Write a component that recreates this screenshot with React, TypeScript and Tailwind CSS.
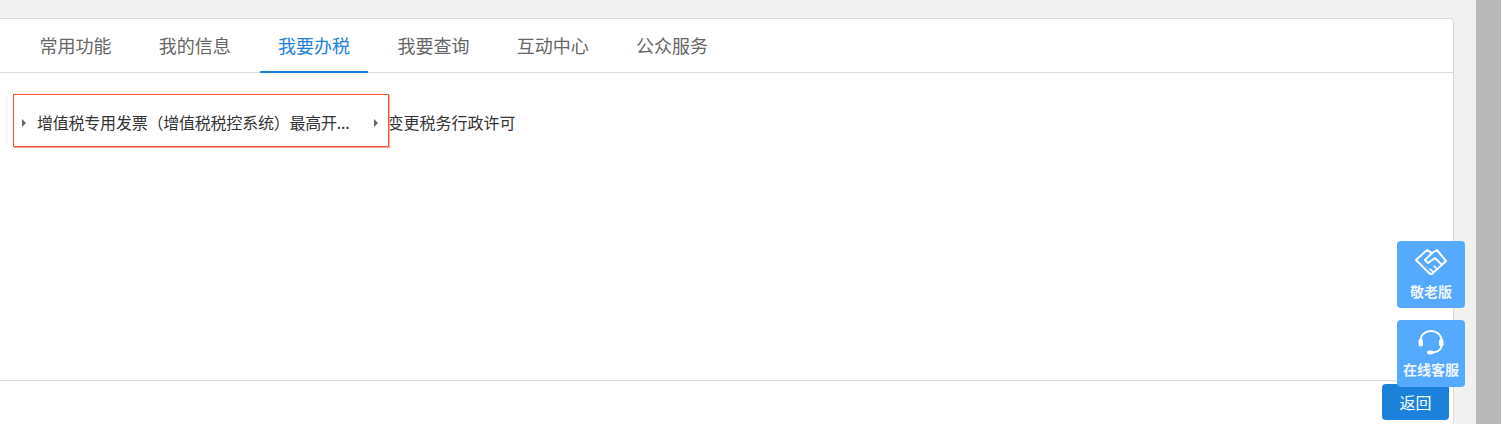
const tabs = ["常用功能", "我的信息", "我要办税", "我要查询", "互动中心", "公众服务"];

function Arrow() {
  return <span className="h-0 w-0 shrink-0 border-y-[4.5px] border-l-[4.5px] border-y-transparent border-l-[#666]" />;
}

function HandshakeIcon() {
  return (
    <svg width="34" height="28" viewBox="0 0 34 28" fill="none" stroke="#fff" strokeWidth="2" strokeLinejoin="round" strokeLinecap="round">
      <path d="M13 2 L2 12 L15 25 Q17 27 19 25 L32 13 L23 2 L18 5 Z" />
      <path d="M18 5 L11 12 L14 15 L21 10 L28 17" />
      <path d="M23 21 L20 18 M19 24 L16 21" strokeWidth="1.5" />
    </svg>
  );
}

function HeadsetIcon() {
  return (
    <svg className="mt-[4px]" width="28" height="28" viewBox="0 0 28 28" fill="none" stroke="#fff" strokeWidth="2" strokeLinecap="round">
      <path d="M3.5 12 C3.5 -1.5 24.5 -1.5 24.5 12" />
      <path d="M24.5 17 C24 21 21 23 16 23.5" />
      <rect x="1.5" y="10" width="4.5" height="7.5" rx="2" fill="#fff" stroke="none" />
      <rect x="22" y="10" width="4.5" height="7.5" rx="2" fill="#fff" stroke="none" />
      <rect x="10" y="21.5" width="6.5" height="4" rx="2" fill="#fff" stroke="none" />
    </svg>
  );
}

function FloatButton({ icon, label, labelClass }: { icon: React.ReactNode; label: string; labelClass: string }) {
  return (
    <div className="flex h-[67px] w-[68px] flex-col items-center rounded bg-[#55aaff] pt-[5px] text-white">
      <div className="flex h-[32px] items-center justify-center">{icon}</div>
      <span className={`${labelClass} text-[14px] font-bold leading-[18px] whitespace-nowrap opacity-90`}>{label}</span>
    </div>
  );
}

export default function App() {
  return (
    <div
      className="relative h-[424px] w-[1502px] overflow-hidden bg-[#f1f1f1] pt-[18px]"
      style={{ fontFamily: '"Microsoft YaHei", "Noto Sans CJK SC", "Liberation Sans", sans-serif' }}
    >
      {/* scrollbar */}
      <div className="absolute top-0 right-px bottom-0 w-[25px] bg-[#b9b9b9]" />

      <div className="ml-[-10px] flex h-[420px] w-[1464px] flex-col rounded-t border border-[#d9d9d9] bg-white">
        {/* Tabs */}
        <div className="flex h-[54px] shrink-0 border-b border-[#d9d9d9] pl-[30px]">
          {tabs.map((t) =>
            t === "我要办税" ? (
              <div key={t} className="mr-[11.3px] h-[54px] w-[108px] border-b-2 border-[#1b81db] pt-[13px] pl-px text-center text-[18px] leading-[27px] text-[#1b81db]">
                {t}
              </div>
            ) : (
              <div key={t} className="mr-[11.3px] w-[108px] pt-[13px] pl-px text-center text-[18px] leading-[27px] text-[#666]">
                {t}
              </div>
            )
          )}
        </div>

        {/* Content */}
        <div className="relative h-[308px] shrink-0 border-b border-[#d9d9d9]">
          <div className="flex items-center pt-[39px] pl-[31px] text-[16px] leading-[20px] text-[#333]">
            <Arrow />
            <span className="mb-[2px] ml-[11px] w-[336.5px] tracking-[-0.22px] whitespace-nowrap">增值税专用发票（增值税税控系统）最高开...</span>
            <Arrow />
            <span className="mb-[2px] ml-[10px] whitespace-nowrap">变更税务行政许可</span>
          </div>
          <div className="absolute top-[21px] left-[22px] h-[53px] w-[376px] border border-[#ff5233] shadow-[1px_1px_0_#ffa99a]" />
        </div>

        {/* Footer */}
        <div className="flex justify-end pt-[3px] pr-[4px]">
          <button className="h-[36px] w-[67px] rounded-sm bg-[#1b81db] text-[16px] text-white">返回</button>
        </div>
      </div>

      {/* floating buttons */}
      <div className="absolute top-[241px] left-[1397px] flex flex-col gap-[12px]">
        <FloatButton icon={<HandshakeIcon />} label="敬老版" labelClass="mt-[4px]" />
        <FloatButton icon={<HeadsetIcon />} label="在线客服" labelClass="mt-[3px]" />
      </div>
    </div>
  );
}
